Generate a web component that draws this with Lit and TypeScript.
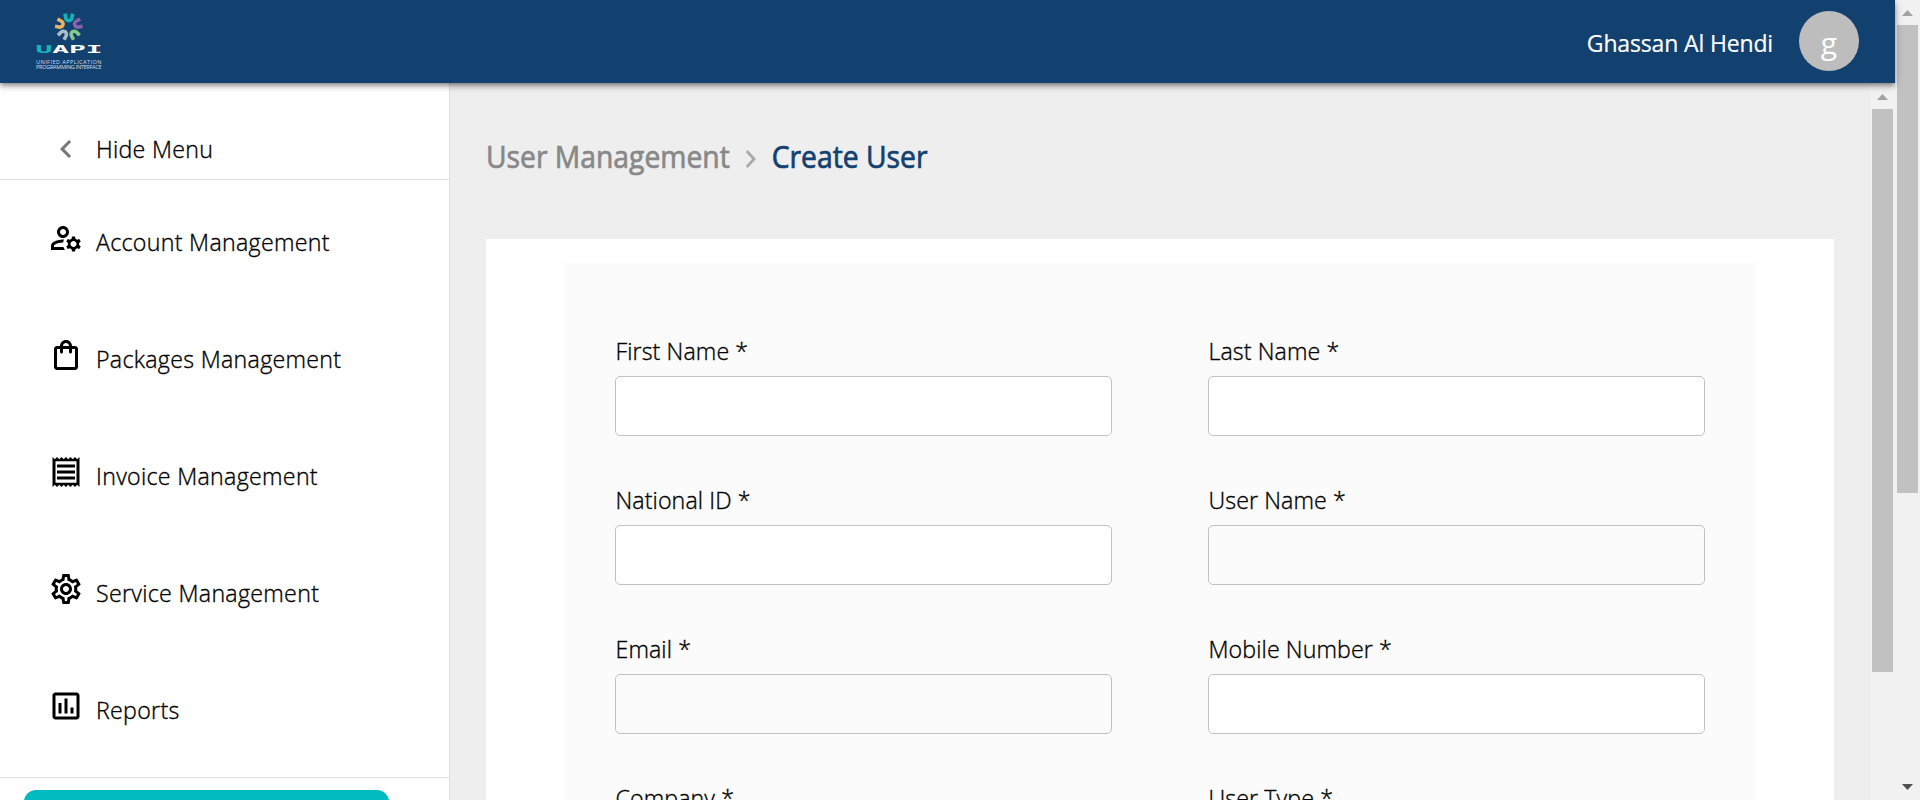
import { LitElement, html, css, svg } from "lit";
import { customElement } from "lit/decorators.js";

const ICONS = {
  left: "M15.41 7.41 14 6l-6 6 6 6 1.41-1.41L10.83 12z",
  right: "M10 6 8.59 7.41 13.17 12l-4.58 4.59L10 18l6-6z",
  bag: "M18 6h-2c0-2.21-1.79-4-4-4S8 3.79 8 6H6c-1.1 0-2 .9-2 2v12c0 1.1.9 2 2 2h12c1.1 0 2-.9 2-2V8c0-1.1-.9-2-2-2zm-6-2c1.1 0 2 .9 2 2h-4c0-1.1.9-2 2-2zm6 16H6V8h2v2c0 .55.45 1 1 1s1-.45 1-1V8h4v2c0 .55.45 1 1 1s1-.45 1-1V8h2v12z",
  receipt: "M19.5 3.5 18 2l-1.5 1.5L15 2l-1.5 1.5L12 2l-1.5 1.5L9 2 7.5 3.5 6 2 4.5 3.5 3 2v20l1.5-1.5L6 22l1.5-1.5L9 22l1.5-1.5L12 22l1.5-1.5L15 22l1.5-1.5L18 22l1.5-1.5L21 22V2l-1.5 1.5zM19 19.09H5V4.91h14v14.18zM6 15h12v2H6zm0-4h12v2H6zm0-4h12v2H6z",
  settings: "M19.43 12.98c.04-.32.07-.64.07-.98 0-.34-.03-.66-.07-.98l2.11-1.65c.19-.15.24-.42.12-.64l-2-3.46c-.09-.16-.26-.25-.44-.25-.06 0-.12.01-.17.03l-2.49 1c-.52-.4-1.08-.73-1.69-.98l-.38-2.65C14.46 2.18 14.25 2 14 2h-4c-.25 0-.46.18-.49.42l-.38 2.65c-.61.25-1.17.59-1.69.98l-2.49-1c-.06-.02-.12-.03-.18-.03-.17 0-.34.09-.43.25l-2 3.46c-.13.22-.07.49.12.64l2.11 1.65c-.04.32-.07.65-.07.98 0 .33.03.66.07.98l-2.11 1.65c-.19.15-.24.42-.12.64l2 3.46c.09.16.26.25.44.25.06 0 .12-.01.17-.03l2.49-1c.52.4 1.08.73 1.69.98l.38 2.65c.03.24.24.42.49.42h4c.25 0 .46-.18.49-.42l.38-2.65c.61-.25 1.17-.59 1.69-.98l2.49 1c.06.02.12.03.18.03.17 0 .34-.09.43-.25l2-3.46c.12-.22.07-.49-.12-.64l-2.11-1.65zm-1.98-1.71c.04.31.05.52.05.73 0 .21-.02.43-.05.73l-.14 1.13.89.7 1.08.84-.7 1.21-1.27-.51-1.04-.42-.9.68c-.43.32-.84.56-1.25.73l-1.06.43-.16 1.13-.2 1.35h-1.4l-.19-1.35-.16-1.13-1.06-.43c-.43-.18-.83-.41-1.23-.71l-.91-.7-1.06.43-1.27.51-.7-1.21 1.08-.84.89-.7-.14-1.13c-.03-.31-.05-.54-.05-.74s.02-.43.05-.73l.14-1.13-.89-.7-1.08-.84.7-1.21 1.27.51 1.04.42.9-.68c.43-.32.84-.56 1.25-.73l1.06-.43.16-1.13.2-1.35h1.39l.19 1.35.16 1.13 1.06.43c.43.18.83.41 1.23.71l.91.7 1.06-.43 1.27-.51.7 1.21-1.07.85-.89.7.14 1.13zM12 8c-2.21 0-4 1.79-4 4s1.79 4 4 4 4-1.79 4-4-1.79-4-4-4zm0 6c-1.1 0-2-.9-2-2s.9-2 2-2 2 .9 2 2-.9 2-2 2z",
  chart: "M9 17H7v-7h2v7zm4 0h-2V7h2v10zm4 0h-2v-4h2v4zm2 2H5V5h14v14zm0-16H5c-1.1 0-2 .9-2 2v14c0 1.1.9 2 2 2h14c1.1 0 2-.9 2-2V5c0-1.1-.9-2-2-2z",
  account: "M4 18v-.65c0-.34.16-.66.41-.81C6.1 15.53 8.03 15 10 15c.03 0 .05 0 .08.01.1-.7.3-1.37.59-1.98-.22-.02-.44-.03-.67-.03-2.42 0-4.68.67-6.61 1.82-.88.52-1.39 1.5-1.39 2.53V20h9.26c-.42-.6-.75-1.28-.97-2H4zM10 12c2.21 0 4-1.79 4-4s-1.79-4-4-4-4 1.79-4 4 1.79 4 4 4zm0-6c1.1 0 2 .9 2 2s-.9 2-2 2-2-.9-2-2 .9-2 2-2zM20.75 16c0-.22-.03-.42-.06-.63l1.14-1.01-1-1.73-1.45.49c-.32-.27-.68-.48-1.08-.63L18 11h-2l-.3 1.49c-.4.15-.76.36-1.08.63l-1.45-.49-1 1.73 1.14 1.01c-.03.21-.06.41-.06.63s.03.42.06.63l-1.14 1.01 1 1.73 1.45-.49c.32.27.68.48 1.08.63L16 21h2l.3-1.49c.4-.15.76-.36 1.08-.63l1.45.49 1-1.73-1.14-1.01c.03-.21.06-.41.06-.63zM17 18c-1.1 0-2-.9-2-2s.9-2 2-2 2 .9 2 2-.9 2-2 2z",
};
const icon = (name: keyof typeof ICONS) =>
  html`<svg class="icon" viewBox="0 0 24 24"><path d=${ICONS[name]} /></svg>`;

const MENU: [keyof typeof ICONS, string][] = [
  ["account", "Account Management"],
  ["bag", "Packages Management"],
  ["receipt", "Invoice Management"],
  ["settings", "Service Management"],
  ["chart", "Reports"],
];

const FIELDS: [string, boolean][] = [
  ["First Name *", false],
  ["Last Name *", false],
  ["National ID *", false],
  ["User Name *", true],
  ["Email *", true],
  ["Mobile Number *", false],
  ["Company *", false],
  ["User Type *", false],
];

const PETALS: [number, string][] = [
  [0, "#14b5b8"],
  [72, "#8b62b0"],
  [144, "#85c98c"],
  [216, "#a9bcc8"],
  [288, "#e9b366"],
];

@customElement("app-root")
export class AppRoot extends LitElement {
  static styles = css`
    :host {
      display: flex;
      width: 1920px;
      height: 800px;
      overflow: hidden;
      background: #fff;
      color: #000;
      font-family: "Open Sans", "Noto Sans", sans-serif;
    }
    * { box-sizing: border-box; }
    .app { flex: 1; display: flex; flex-direction: column; min-width: 0; }
    header {
      flex: none;
      height: 83px;
      display: flex;
      align-items: center;
      padding: 0 36px 0 30px;
      background: #12406f;
      color: #fff;
      z-index: 2;
      box-shadow: 0 2px 4px -1px rgba(0,0,0,.3), 0 4px 5px rgba(0,0,0,.2), 0 1px 10px rgba(0,0,0,.16);
    }
    .logo { width: 80px; height: 83px; }
    .name { margin: 2px 26px 0 auto; font-size: 23px; letter-spacing: -0.15px; -webkit-text-stroke: 0.2px; white-space: nowrap; }
    .avatar {
      width: 60px; height: 60px; border-radius: 50%;
      display: flex; align-items: center; justify-content: center;
      background: #bdbdbd; font-size: 30px; line-height: 60px;
      margin-bottom: 1px; padding-top: 3px;
    }
    .body { flex: 1; display: flex; min-height: 0; }
    aside { width: 450px; border-right: 1px solid #e0e0e0; background: #fff; display: flex; flex-direction: column; }
    .icon { width: 36px; height: 36px; flex: none; fill: currentColor; display: block; }
    .hide { flex: none; height: 97px; padding: 36px 0 0 48px; display: flex; align-items: center; border-bottom: 1px solid #e0e0e0; }
    .hide .icon { color: #757575; }
    .hide span { margin-left: 12px; }
    .menu { height: 598px; flex: none; border-bottom: 1px solid #e0e0e0; }
    .item { height: 117px; display: flex; align-items: center; padding: 0 0 1px 48px; }
    .item span { margin: 8px 0 0 12px; }
    .text { font-size: 23.2px; font-weight: 300; -webkit-text-stroke: 0.35px; letter-spacing: 0.3px; line-height: 32px; white-space: nowrap; }
    .cta { width: 365px; height: 60px; margin: 12px 0 0 24px; border-radius: 12px; background: #00bbc0; flex: none; }
    main { flex: 1; background: #eee; padding: 0 36px; overflow: hidden; }
    .crumbs { height: 156px; display: flex; align-items: center; padding-bottom: 10px; font-size: 31px; transform: scaleX(.912); transform-origin: 0 0; -webkit-text-stroke: 0.7px; white-space: nowrap; color: #888; }
    .crumbs .icon { color: #aaa; margin: 5px 5px 0 5px; -webkit-text-stroke: 0; }
    .here { color: #12406f; }
    .card { background: #fff; padding: 24px 78px; height: 700px; }
    .panel { background: #fbfbfb; height: 676px; padding: 70px 51px; display: grid; grid-template-columns: 497px 497px; justify-content: space-between; grid-auto-rows: 149px; }
    .field { display: flex; flex-direction: column; }
    label.text { letter-spacing: 0.1px; padding-left: 0.5px; height: 43px; line-height: 37px; }
    input { width: 100%; height: 60px; flex: none; border: 1px solid #c2c2c2; border-radius: 5px; background: #fff; outline: none; }
    input:disabled { background: transparent; }
    .bar { width: 25px; flex: none; display: flex; flex-direction: column; align-items: center; background: #f1f1f1; color: #a3a3a3; }
    .arrow { width: 25px; height: 26px; flex: none; fill: currentColor; display: block; }
    .thumb { width: 21px; background: #c1c1c1; }
    .page .thumb { height: 468px; }
    .page .arrow { height: 25px; }
    .inner .thumb { height: 563px; }
    .down { margin-top: auto; color: #505050; }
  `;

  render() {
    return html`
      <div class="app">
        <header>
          <svg class="logo" viewBox="30 0 80 83">
            ${PETALS.map(([a, c]) => svg`<path d="M65 13.6L65.6 17.4a3.2 3.2 0 0 0 6.4 0L72.6 13.6" transform=${`rotate(${a} 68.8 26.8)`} fill="none" stroke=${c} stroke-width="3.6"/>`)}
            <text x="35.5" y="53.2" font-family="DejaVu Sans Mono" font-weight="700" font-size="10.4" textLength="67" lengthAdjust="spacingAndGlyphs" fill="#fff"><tspan fill="#14b5b8">U</tspan>API</text>
            <text x="36" y="63.5" font-size="5.6" textLength="65.5" fill="#d5dee8">UNIFIED APPLICATION</text>
            <text x="36" y="69" font-size="5.6" textLength="65.5" fill="#d5dee8">PROGRAMMING INTERFACE</text>
          </svg>
          <span class="name">Ghassan Al Hendi</span>
          <div class="avatar">g</div>
        </header>
        <div class="body">
          <aside>
            <div class="hide text">${icon("left")}<span>Hide Menu</span></div>
            <nav class="menu text">
              ${MENU.map(([i, t]) => html`<div class="item">${icon(i)}<span>${t}</span></div>`)}
            </nav>
            <div class="cta"></div>
          </aside>
          <main>
            <div class="crumbs"><span>User Management</span>${icon("right")}<span class="here">Create User</span></div>
            <div class="card">
              <div class="panel">
                ${FIELDS.map(([t, d]) => html`<div class="field"><label class="text">${t}</label><input ?disabled=${d} /></div>`)}
              </div>
            </div>
          </main>
          <div class="bar inner">
            <svg class="arrow" viewBox="0 0 25 26"><path d="M7 17 12.5 11 18 17z" /></svg>
            <div class="thumb"></div>
          </div>
        </div>
      </div>
      <div class="bar page">
        <svg class="arrow" viewBox="0 0 25 25"><path d="M7 16 12.5 10 18 16z" /></svg>
        <div class="thumb"></div>
        <svg class="arrow down" viewBox="0 0 25 25"><path d="M7 9 12.5 15 18 9z" /></svg>
      </div>
    `;
  }
}
